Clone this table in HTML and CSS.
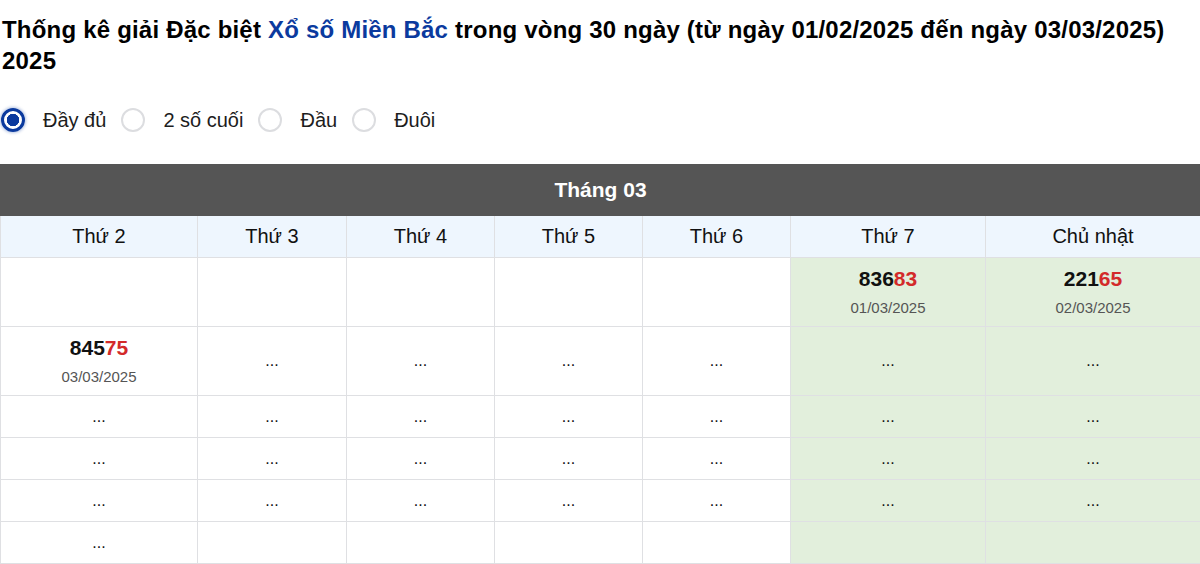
FILE: index.html
```html
<!DOCTYPE html>
<html lang="vi">
<head>
<meta charset="utf-8">
<title>Thống kê giải Đặc biệt</title>
<link rel="stylesheet" href="styles.css">
</head>
<body>
<h1 class="title">Thống kê giải Đặc biệt <a class="title-link" href="#">Xổ số Miền Bắc</a> trong vòng 30 ngày (từ ngày 01/02/2025 đến ngày 03/03/2025) 2025</h1>
<div class="options">
  <label class="opt"><span class="radio checked"></span><span class="opt-text">Đầy đủ</span></label>
  <label class="opt"><span class="radio"></span><span class="opt-text">2 số cuối</span></label>
  <label class="opt"><span class="radio"></span><span class="opt-text">Đầu</span></label>
  <label class="opt"><span class="radio"></span><span class="opt-text">Đuôi</span></label>
</div>
<table class="cal">
  <colgroup>
    <col class="c1"><col class="c2"><col class="c3"><col class="c4"><col class="c5"><col class="c6"><col class="c7">
  </colgroup>
  <thead>
    <tr><th class="month" colspan="7">Tháng 03</th></tr>
    <tr class="days"><th>Thứ 2</th><th>Thứ 3</th><th>Thứ 4</th><th>Thứ 5</th><th>Thứ 6</th><th>Thứ 7</th><th>Chủ nhật</th></tr>
  </thead>
  <tbody>
    <tr class="tall">
      <td></td><td></td><td></td><td></td><td></td>
      <td class="we"><div class="num">836<span class="red">83</span></div><div class="date">01/03/2025</div></td>
      <td class="we"><div class="num">221<span class="red">65</span></div><div class="date">02/03/2025</div></td>
    </tr>
    <tr class="tall">
      <td><div class="num">845<span class="red">75</span></div><div class="date">03/03/2025</div></td>
      <td>...</td><td>...</td><td>...</td><td>...</td><td class="we">...</td><td class="we">...</td>
    </tr>
    <tr><td>...</td><td>...</td><td>...</td><td>...</td><td>...</td><td class="we">...</td><td class="we">...</td></tr>
    <tr><td>...</td><td>...</td><td>...</td><td>...</td><td>...</td><td class="we">...</td><td class="we">...</td></tr>
    <tr><td>...</td><td>...</td><td>...</td><td>...</td><td>...</td><td class="we">...</td><td class="we">...</td></tr>
    <tr><td>...</td><td></td><td></td><td></td><td></td><td class="we"></td><td class="we"></td></tr>
  </tbody>
</table>
</body>
</html>
```

FILE: styles.css
```css
* { box-sizing: border-box; }
body {
  margin: 0;
  padding: 0;
  font-family: "Liberation Sans", Arial, sans-serif;
  color: #000;
  background: #fff;
}
.title {
  margin: 0;
  padding: 14px 20px 0 2px;
  font-size: 24px;
  line-height: 31px;
  font-weight: bold;
  letter-spacing: 0.2px;
}
.title-link {
  color: #0b3a9e;
  text-decoration: none;
}
.options {
  display: flex;
  align-items: center;
  margin-top: 29px;
  height: 30px;
}
.opt {
  display: flex;
  align-items: center;
}
.radio {
  width: 24px;
  height: 24px;
  margin: 0 18px 0 1px;
  border-radius: 50%;
  border: 2px solid #dcdde0;
  background: #fff;
}
.radio.checked {
  border: 3px solid #0b3a9e;
  background: radial-gradient(circle, #0b3a9e 0 6px, #fff 6.5px);
  box-shadow: 0 0 3px 1px rgba(11, 58, 158, 0.3);
}
.opt-text {
  font-size: 20px;
  color: #1d1d1d;
  margin-right: 14px;
}
.cal {
  margin-top: 29px;
  width: 1200px;
  border-collapse: collapse;
  table-layout: fixed;
  text-align: center;
}
.c1 { width: 197px; }
.c2 { width: 149px; }
.c3 { width: 148px; }
.c4 { width: 148px; }
.c5 { width: 148px; }
.c6 { width: 195px; }
.c7 { width: 215px; }
.cal th, .cal td {
  border: 1px solid #dfe0e3;
  padding: 0;
}
.month {
  background: #555555;
  color: #fff;
  font-size: 21px;
  font-weight: bold;
  height: 51px;
  border-color: #555555 !important;
}
.days th {
  background: #eef6fe;
  font-weight: normal;
  font-size: 20px;
  height: 42px;
  color: #111;
}
.cal td {
  height: 42px;
  font-size: 16px;
  color: #111;
}
.cal tr.tall td {
  height: 69px;
}
.cal td.we {
  background: #e2efdc;
}
.num {
  font-size: 21px;
  font-weight: bold;
  line-height: 26px;
}
.red { color: #d32a2a; }
.date {
  font-size: 15px;
  color: #555;
  line-height: 20px;
  margin-top: 6px;
}
```
